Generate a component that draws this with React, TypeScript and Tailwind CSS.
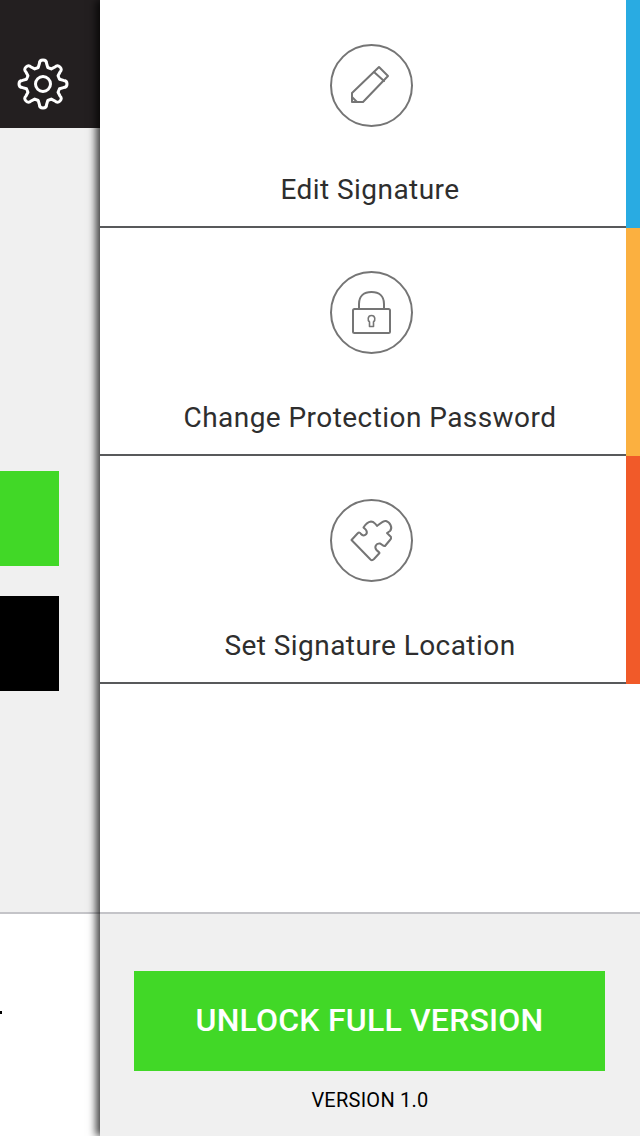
const gearPath = (() => {
  const cx = 26;
  const cy = 26;
  let d = "";
  for (let i = 0; i < 8; i++) {
    const a = (i * Math.PI) / 4 - Math.PI / 2;
    const pt = (r: number, off: number) => {
      const x = cx + r * Math.cos(a) - off * Math.sin(a);
      const y = cy + r * Math.sin(a) + off * Math.cos(a);
      return `${x.toFixed(2)} ${y.toFixed(2)}`;
    };
    d += `${i === 0 ? "M" : "L"}${pt(16.5, -4.8)} L${pt(20.5, -3.6)} Q${pt(24, -3.6)} ${pt(24, 0)} Q${pt(24, 3.6)} ${pt(20.5, 3.6)} L${pt(16.5, 4.8)} `;
  }
  return d + "Z";
})();

const GearIcon = () => (
  <svg width="52" height="52" viewBox="0 0 52 52" fill="none" stroke="#fff" strokeWidth="3" strokeLinejoin="round">
    <path d={gearPath} />
    <circle cx="26" cy="26" r="7.5" />
  </svg>
);

const IconCircle = ({ children }: { children: React.ReactNode }) => (
  <svg width="84" height="84" viewBox="0 0 84 84" fill="none" stroke="#757575" strokeWidth="2" strokeLinejoin="round" strokeLinecap="round">
    <circle cx="41.5" cy="41.5" r="40.5" />
    {children}
  </svg>
);

const rows = [
  {
    label: "Edit Signature",
    strip: "bg-[#29abe2]",
    top: "pt-[44px]",
    gap: "mt-[44px]",
    icon: (
      <>
        <path d="M22 58 L22 49 L49 23 L58 32 L33 58 Z" />
        <path d="M44 28 L54 37" />
        <path d="M22 53 L27 58" />
      </>
    ),
  },
  {
    label: "Change Protection Password",
    strip: "bg-[#fbb040]",
    top: "pt-[43px]",
    gap: "mt-[45px]",
    icon: (
      <>
        <rect x="23" y="38" width="37" height="24" rx="1.5" />
        <path d="M29 38 V33 C29 25 34 21 41.5 21 C49 21 54 25 54 33 V38" />
        <path d="M39.5 51 C37.5 49.5 37.5 44.5 41.5 44.5 C45.5 44.5 45.5 49.5 43.5 51 V55.5 H39.5 Z" strokeWidth="1.6" />
      </>
    ),
  },
  {
    label: "Set Signature Location",
    strip: "bg-[#f15a29]",
    top: "pt-[43px]",
    gap: "mt-[45px]",
    icon: (
      <path d="M21.5 41 L27.5 34.5 C29 33 30 33.5 31 35 C33.5 38 38 35.5 36.5 32 C36 30.5 35 30 33.5 28.5 C35 26 38 23 41 22.5 C43.5 22.5 44.5 24 45.5 25 L47 27 C49.5 25 53 21.5 56 22 C60 23 63 29 60 32 L57 34 L61 38 C61.5 39.5 61 40 60 41 L55 47 C53 47.5 52.5 45.5 50 44.5 C46 44 44 48 46.5 51 C48 52.5 49 53 49.5 54 L44 60 C42.5 61.5 41 61.5 40 60 Z" />
    ),
  },
];

export default function App() {
  return (
    <div className="flex h-[1136px] w-[640px] overflow-hidden bg-white font-['Roboto',sans-serif]">
      <div className="flex w-[100px] shrink-0 flex-col">
        <div className="flex h-[128px] items-end bg-[#231f20] pb-[18px] pl-[17px]">
          <GearIcon />
        </div>
        <div className="flex flex-1 flex-col gap-[30px] border-b-2 border-[#c4c4c8] bg-[#f0f0f0] pt-[343px]">
          <div className="h-[95px] w-[59px] bg-[#41d827]" />
          <div className="h-[95px] w-[59px] bg-black" />
        </div>
        <div className="h-[222px] bg-white pt-[97px]">
          <div className="h-[3px] w-[2px] bg-black" />
        </div>
      </div>

      <div className="z-10 flex flex-1 flex-col bg-white shadow-[-4px_0_8px_rgba(0,0,0,0.75)]">
        <div className="flex-1">
          {rows.map((row) => (
            <div key={row.label} className="flex h-[228px]">
              <div className={`flex flex-1 flex-col items-center border-b-2 border-[#58595b] pl-[14px] ${row.top}`}>
                <div className="ml-[4px] h-[84px]">
                  <IconCircle>{row.icon}</IconCircle>
                </div>
                <div className={`${row.gap} text-[28px] leading-[36px] tracking-[0.44px] text-[#2e2e2e]`}>{row.label}</div>
              </div>
              <div className={`w-[14px] ${row.strip}`} />
            </div>
          ))}
        </div>
        <div className="flex h-[224px] flex-col border-t-2 border-[#c4c4c8] bg-[#f0f0f0] pt-[57px]">
          <div className="ml-[34px] flex h-[100px] w-[471px] items-center justify-center bg-[#41d827] pb-[2px] text-[32px] font-medium tracking-[0.2px] text-white">
            UNLOCK FULL VERSION
          </div>
          <div className="mt-[16px] text-center text-[20px] leading-[26px] tracking-[0.25px] text-black">VERSION 1.0</div>
        </div>
      </div>
    </div>
  );
}
